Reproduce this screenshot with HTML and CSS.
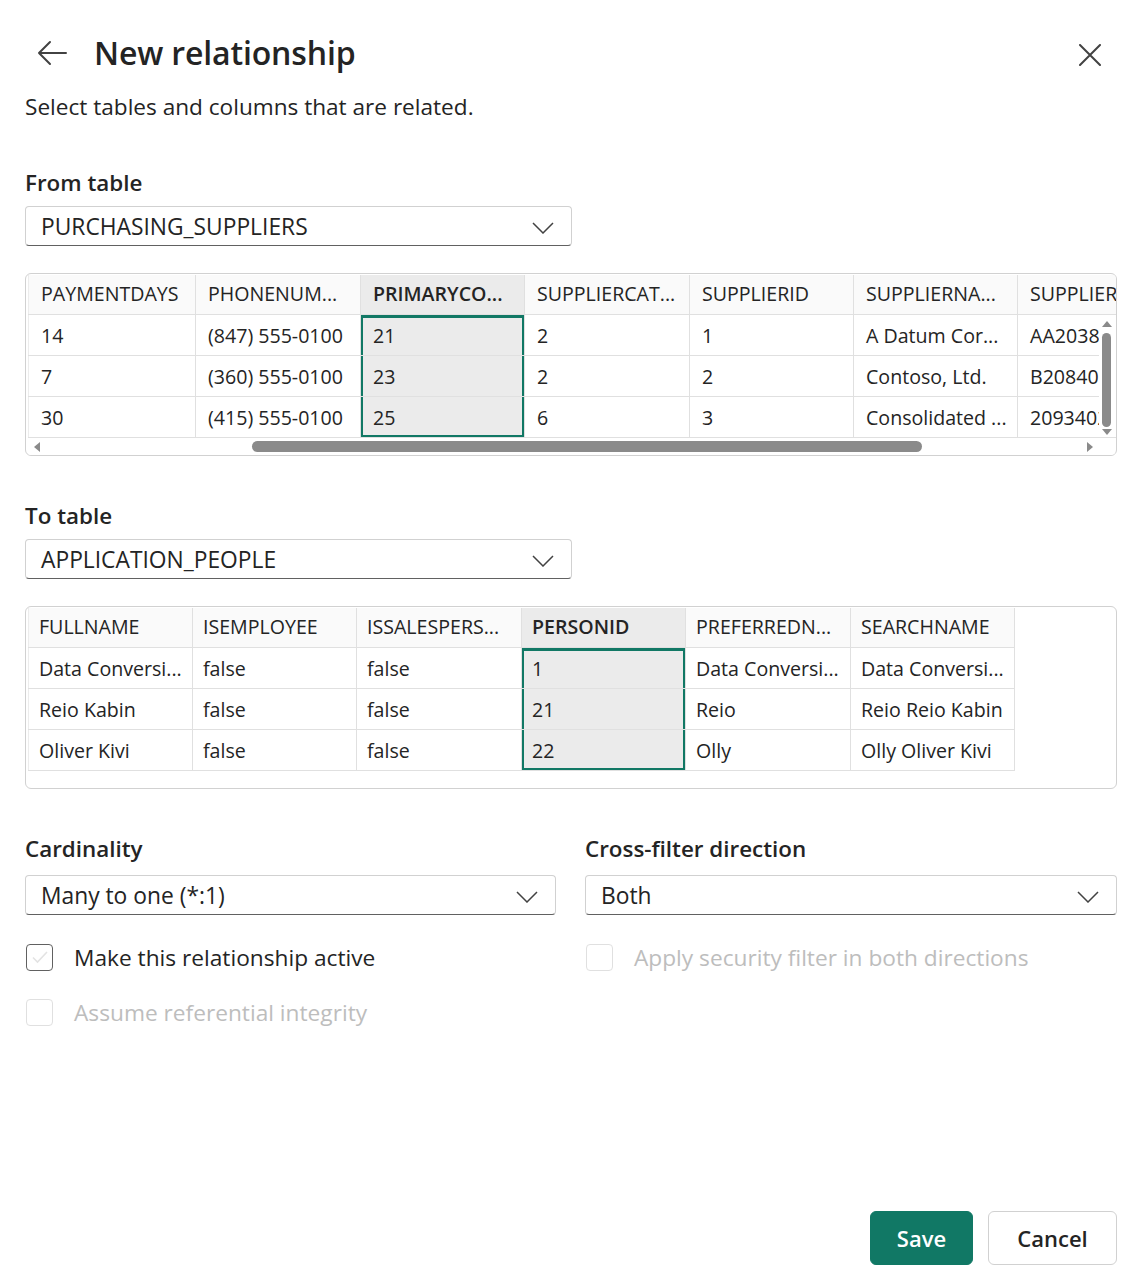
FILE: index.html
```html
<!DOCTYPE html>
<html lang="en">
<head>
<meta charset="utf-8">
<title>New relationship</title>
<link rel="stylesheet" href="styles.css">
</head>
<body>
<div class="dialog">
  <header class="head">
    <button class="icon-btn back" aria-label="Back">
      <svg width="30" height="26" viewBox="0 0 30 26"><path d="M29 13H2M13 2L2 13l11 11" fill="none" stroke="#424242" stroke-width="2" stroke-linecap="round" stroke-linejoin="round"/></svg>
    </button>
    <h1 class="title">New relationship</h1>
    <button class="icon-btn close" aria-label="Close">
      <svg width="22" height="22" viewBox="0 0 22 22"><path d="M1 1l20 20M21 1L1 21" fill="none" stroke="#424242" stroke-width="2" stroke-linecap="round"/></svg>
    </button>
  </header>
  <p class="subtitle">Select tables and columns that are related.</p>

  <section class="block from">
    <div class="label">From table</div>
    <div class="select w547"><span>PURCHASING_SUPPLIERS</span><svg class="chev" width="22" height="12" viewBox="0 0 22 12"><path d="M1 1l10 10L21 1" fill="none" stroke="#424242" stroke-width="1.5"/></svg></div>
    <div class="grid-box g1">
      <table class="grid">
        <colgroup><col style="width:167px"><col style="width:165px"><col style="width:164px"><col style="width:165px"><col style="width:164px"><col style="width:164px"><col style="width:165px"></colgroup>
        <thead><tr><th>PAYMENTDAYS</th><th>PHONENUM...</th><th class="sel">PRIMARYCO...</th><th>SUPPLIERCAT...</th><th>SUPPLIERID</th><th>SUPPLIERNA...</th><th>SUPPLIERREFERENCE</th></tr></thead>
        <tbody>
          <tr><td>14</td><td>(847) 555-0100</td><td class="sel first">21</td><td>2</td><td>1</td><td>A Datum Cor...</td><td>AA20384</td></tr>
          <tr><td>7</td><td>(360) 555-0100</td><td class="sel">23</td><td>2</td><td>2</td><td>Contoso, Ltd.</td><td>B2084020</td></tr>
          <tr><td>30</td><td>(415) 555-0100</td><td class="sel last">25</td><td>6</td><td>3</td><td>Consolidated ...</td><td>209340283</td></tr>
        </tbody>
      </table>
      <div class="hscroll">
        <span class="tri left"></span>
        <div class="htrack"><div class="hthumb"></div></div>
        <span class="tri right"></span>
      </div>
      <div class="vscroll">
        <span class="tri up"></span>
        <div class="vthumb"></div>
        <span class="tri down"></span>
      </div>
    </div>
  </section>

  <section class="block to">
    <div class="label">To table</div>
    <div class="select w547"><span>APPLICATION_PEOPLE</span><svg class="chev" width="22" height="12" viewBox="0 0 22 12"><path d="M1 1l10 10L21 1" fill="none" stroke="#424242" stroke-width="1.5"/></svg></div>
    <div class="grid-box g2">
      <table class="grid t2">
        <colgroup><col style="width:164px"><col style="width:164px"><col style="width:165px"><col style="width:164px"><col style="width:165px"><col style="width:164px"></colgroup>
        <thead><tr><th>FULLNAME</th><th>ISEMPLOYEE</th><th>ISSALESPERS...</th><th class="sel">PERSONID</th><th>PREFERREDN...</th><th>SEARCHNAME</th></tr></thead>
        <tbody>
          <tr><td>Data Conversi...</td><td>false</td><td>false</td><td class="sel first">1</td><td>Data Conversi...</td><td>Data Conversi...</td></tr>
          <tr><td>Reio Kabin</td><td>false</td><td>false</td><td class="sel">21</td><td>Reio</td><td>Reio Reio Kabin</td></tr>
          <tr><td>Oliver Kivi</td><td>false</td><td>false</td><td class="sel last">22</td><td>Olly</td><td>Olly Oliver Kivi</td></tr>
        </tbody>
      </table>
    </div>
  </section>

  <section class="options">
    <div class="opt-col">
      <div class="label">Cardinality</div>
      <div class="select"><span>Many to one (*:1)</span><svg class="chev" width="22" height="12" viewBox="0 0 22 12"><path d="M1 1l10 10L21 1" fill="none" stroke="#424242" stroke-width="1.5"/></svg></div>
      <label class="check"><span class="box"><svg width="20" height="16" viewBox="0 0 20 16"><path d="M3 8.5l4.5 4.5L17 3" fill="none" stroke="#e3e3e3" stroke-width="1.6"/></svg></span><span>Make this relationship active</span></label>
      <label class="check disabled"><span class="box"></span><span>Assume referential integrity</span></label>
    </div>
    <div class="opt-col">
      <div class="label">Cross-filter direction</div>
      <div class="select"><span>Both</span><svg class="chev" width="22" height="12" viewBox="0 0 22 12"><path d="M1 1l10 10L21 1" fill="none" stroke="#424242" stroke-width="1.5"/></svg></div>
      <label class="check disabled"><span class="box"></span><span>Apply security filter in both directions</span></label>
    </div>
  </section>

  <footer class="foot">
    <button class="btn primary">Save</button>
    <button class="btn secondary">Cancel</button>
  </footer>
</div>
</body>
</html>
```
FILE: styles.css
```css
* { box-sizing: border-box; }
html, body { margin: 0; padding: 0; background: #fff; }
body {
  font-family: "Open Sans", "Noto Sans", "Liberation Sans", sans-serif;
  color: #242424;
}
.dialog {
  min-height: 1280px;
  padding: 0 25px 15px 25px;
  display: flex;
  flex-direction: column;
}
.head {
  display: flex;
  align-items: center;
  height: 64px;
  margin-top: 21px;
}
.icon-btn {
  border: 0;
  background: none;
  padding: 0;
  display: flex;
  align-items: center;
  justify-content: center;
  cursor: pointer;
}
.back { margin-left: 12px; width: 30px; height: 30px; }
.title {
  margin: 0 0 0 27px;
  font-size: 32px;
  font-weight: 600;
  letter-spacing: -0.15px;
  line-height: 40px;
}
.close { margin-left: auto; margin-right: 15px; width: 24px; height: 24px; margin-top: 3px; }
.subtitle {
  margin: 8px 0 0 0;
  font-size: 22.6px;
  line-height: 28px;
  color: #242424;
}
.label {
  font-size: 22.4px;
  font-weight: 600;
  line-height: 28px;
}
.block.from { margin-top: 48px; }
.block.to { margin-top: 46px; }
.select {
  margin-top: 9px;
  height: 40px;
  border: 1px solid #d1d1d1;
  border-bottom-color: #616161;
  border-radius: 4px;
  display: flex;
  align-items: center;
  padding: 0 17px 0 15px;
  font-size: 22.8px;
}
.select span { flex: 1; }
.chev { margin-top: 4px; }
.w547 { width: 547px; }

.grid-box {
  position: relative;
  margin-top: 27px;
  border: 1px solid #d1d1d1;
  border-radius: 6px;
  padding: 1px 1px 0 2px;
  overflow: hidden;
  height: 183px;
}
.grid {
  border-collapse: collapse;
  table-layout: fixed;
  font-size: 19.6px;
  white-space: nowrap;
}
.g1 .grid { width: 1154px; }
.grid th, .grid td {
  border: 1px solid #e0e0e0;
  text-align: left;
  overflow: hidden;
  padding: 0 0 0 12px;
}
.grid th {
  height: 39px;
  font-weight: 400;
  background: #fafafa;
  color: #242424;
  border-top: 0;
  padding-bottom: 2px;
}
.grid td { height: 41px; padding-top: 2px; }
.grid tr > :first-child { border-left-color: #ececec; }
.t2 th, .t2 td { padding-left: 10px; }
.grid th.sel { background: #ebebeb; font-weight: 600; }
.grid td.sel {
  background: #ebebeb;
  box-shadow: inset 2px 0 #117865, inset -2px 0 #117865;
}
.grid td.sel.first { box-shadow: inset 2px 0 #117865, inset -2px 0 #117865, inset 0 3px #117865; }
.grid td.sel.last { box-shadow: inset 2px 0 #117865, inset -2px 0 #117865, inset 0 -2px #117865; }

.hscroll {
  height: 18px;
  display: flex;
  align-items: center;
  padding: 0 22px 0 6px;
  background: #fff;
}
.htrack { flex: 1; position: relative; height: 11px; margin: 0 12px; }
.hthumb {
  position: absolute;
  left: 200px;
  width: 670px;
  top: 0;
  height: 11px;
  border-radius: 6px;
  background: #8a8a8a;
}
.tri { width: 0; height: 0; display: block; }
.tri.left { border-top: 5px solid transparent; border-bottom: 5px solid transparent; border-right: 6px solid #8a8a8a; }
.tri.right { border-top: 5px solid transparent; border-bottom: 5px solid transparent; border-left: 6px solid #8a8a8a; }
.vscroll {
  position: absolute;
  right: 0;
  top: 42px;
  width: 17px;
  height: 120px;
  background: #fff;
  display: flex;
  flex-direction: column;
  align-items: center;
  padding: 5px 2px 0 0;
}
.tri.up { border-left: 5px solid transparent; border-right: 5px solid transparent; border-bottom: 6px solid #8a8a8a; }
.tri.down { border-left: 5px solid transparent; border-right: 5px solid transparent; border-top: 6px solid #8a8a8a; }
.vthumb { width: 9px; height: 94px; border-radius: 5px; background: #8a8a8a; margin: 6px 0 2px; }

.g2 { height: 183px; }

.options {
  margin-top: 46px;
  display: grid;
  grid-template-columns: 531px 532px;
  column-gap: 29px;
}
.opt-col .select { margin-top: 12px; }
.check {
  display: flex;
  align-items: center;
  gap: 21px;
  font-size: 22.7px;
  height: 28px;
  margin-top: 28px;
  padding-left: 1px;
}
.check + .check { margin-top: 27px; }
.check .box {
  width: 27px;
  height: 27px;
  border: 1.5px solid #616161;
  border-radius: 4px;
  display: flex;
  align-items: center;
  justify-content: center;
}
.check.disabled { color: #bdbdbd; }
.check.disabled .box { border-color: #e0e0e0; }

.foot {
  margin-top: auto;
  display: flex;
  justify-content: flex-end;
  gap: 15px;
}
.btn {
  height: 54px;
  border-radius: 6px;
  border: 1.5px solid #d1d1d1;
  background: #fff;
  color: #242424;
  font-family: inherit;
  font-size: 22px;
  font-weight: 600;
  padding: 0;
}
.btn.primary { width: 103px; background: #117865; border-color: #117865; color: #fff; }
.btn.secondary { width: 129px; }
```
